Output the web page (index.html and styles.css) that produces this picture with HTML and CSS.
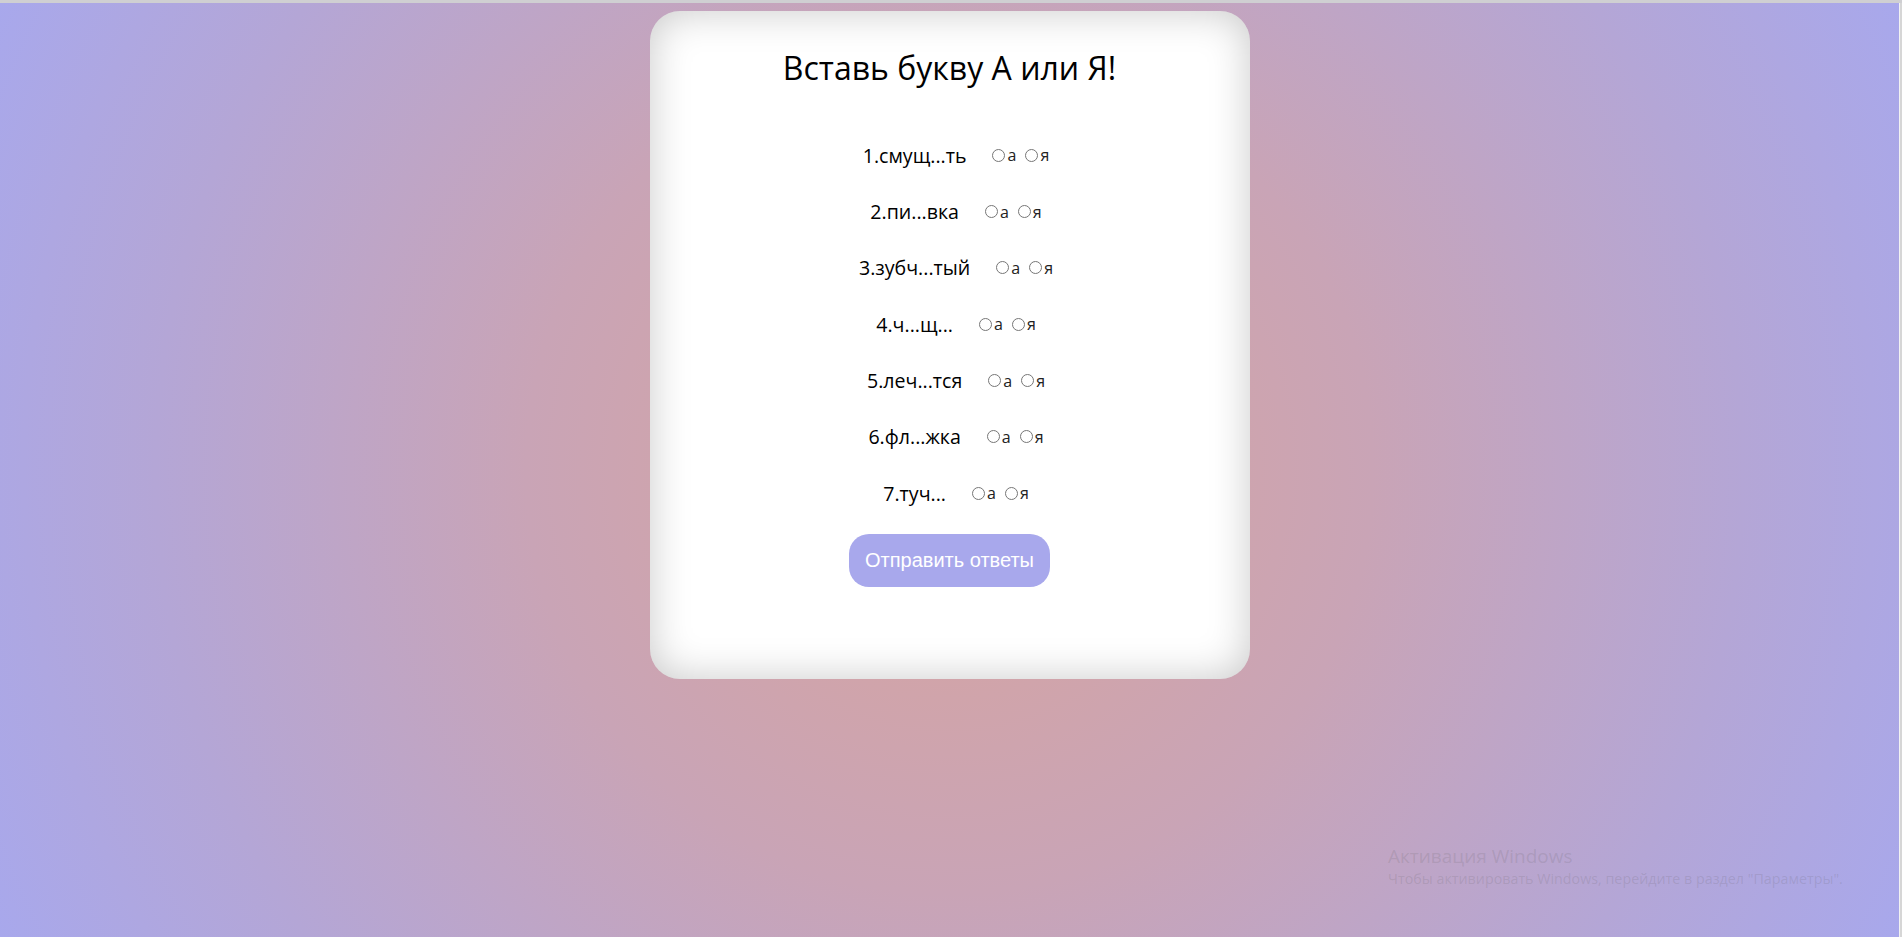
FILE: index.html
```html
<!DOCTYPE html>
<html lang="ru">
<head>
<meta charset="utf-8">
<title>Вставь букву А или Я!</title>
<link rel="stylesheet" href="styles.css">
</head>
<body>
<div class="screen">
  <div class="topbar"></div>
  <div class="row-main">
    <main class="viewport">
      <form class="card">
        <h1 class="title">Вставь букву А или Я!</h1>
        <div class="questions">
          <div class="q"><span class="word">1.смущ...ть</span><label class="opt"><input type="radio" name="q1">а</label><label class="opt"><input type="radio" name="q1">я</label></div>
          <div class="q"><span class="word">2.пи...вка</span><label class="opt"><input type="radio" name="q2">а</label><label class="opt"><input type="radio" name="q2">я</label></div>
          <div class="q"><span class="word">3.зубч...тый</span><label class="opt"><input type="radio" name="q3">а</label><label class="opt"><input type="radio" name="q3">я</label></div>
          <div class="q"><span class="word">4.ч...щ...</span><label class="opt"><input type="radio" name="q4">а</label><label class="opt"><input type="radio" name="q4">я</label></div>
          <div class="q"><span class="word">5.леч...тся</span><label class="opt"><input type="radio" name="q5">а</label><label class="opt"><input type="radio" name="q5">я</label></div>
          <div class="q"><span class="word">6.фл...жка</span><label class="opt"><input type="radio" name="q6">а</label><label class="opt"><input type="radio" name="q6">я</label></div>
          <div class="q"><span class="word">7.туч...</span><label class="opt"><input type="radio" name="q7">а</label><label class="opt"><input type="radio" name="q7">я</label></div>
        </div>
        <button type="button" class="submit">Отправить ответы</button>
      </form>
      <div class="watermark">
        <div class="wm-title">Активация Windows</div>
        <div class="wm-text">Чтобы активировать Windows, перейдите в раздел "Параметры".</div>
      </div>
    </main>
    <div class="edge"></div>
  </div>
</div>
</body>
</html>
```

FILE: styles.css
```css
* { box-sizing: border-box; }
html, body { margin: 0; padding: 0; height: 100%; }
body { font-family: "Open Sans", "Noto Sans", sans-serif; overflow: hidden; }

.screen { display: flex; flex-direction: column; height: 100vh; }
.topbar { height: 3px; background: #cfcfd2; flex: none; }
.row-main { flex: 1; display: flex; min-height: 0; }
.edge { width: 3px; flex: none; background: linear-gradient(to right, #f2f2f2 0 1px, #d6d6d6 1px); }

.viewport {
  flex: 1;
  position: relative;
  background: radial-gradient(circle farthest-corner at 50% 50%, #d8a49e 0%, #c9a4b6 40%, #b4a6d6 75%, #a8a8ec 100%);
  padding-top: 8px;
  overflow: hidden;
}

.card {
  width: 600px;
  height: 668px;
  margin: 0 auto;
  background: #fff;
  border-radius: 30px;
  box-shadow: inset 0 0 40px rgba(0, 0, 0, 0.22);
  padding-top: 35px;
  display: flex;
  flex-direction: column;
  align-items: center;
}

.title {
  margin: 0;
  font-size: 32px;
  font-weight: 500;
  line-height: 44px;
  color: #000;
}

.questions {
  margin-top: 37px;
  display: flex;
  flex-direction: column;
  width: 100%;
}

.q {
  height: 56.35px;
  display: flex;
  justify-content: center;
  align-items: center;
  padding-left: 17px;
  font-size: 19.6px;
  color: #000;
}

.word { margin-right: 21px; }

.opt {
  display: inline-flex;
  align-items: center;
  font-size: 16px;
  color: #222;
  margin-right: 4px;
}
.opt input {
  width: 13px;
  height: 13px;
  margin: 0 2px 0 5px;
}

.submit {
  margin-top: 13px;
  border: none;
  background: #a8a8ec;
  color: #fff;
  font-family: "Liberation Sans", Arial, sans-serif;
  font-size: 20px;
  line-height: 23px;
  padding: 15px 16px;
  border-radius: 20px;
  cursor: pointer;
}

.watermark {
  position: absolute;
  left: 1388px;
  top: 840px;
  color: rgba(100, 95, 100, 0.18);
  font-family: "Open Sans", "Noto Sans", sans-serif;
  pointer-events: none;
}
.wm-title { font-size: 19px; line-height: 26px; }
.wm-text { font-size: 14.3px; line-height: 20px; }
```
